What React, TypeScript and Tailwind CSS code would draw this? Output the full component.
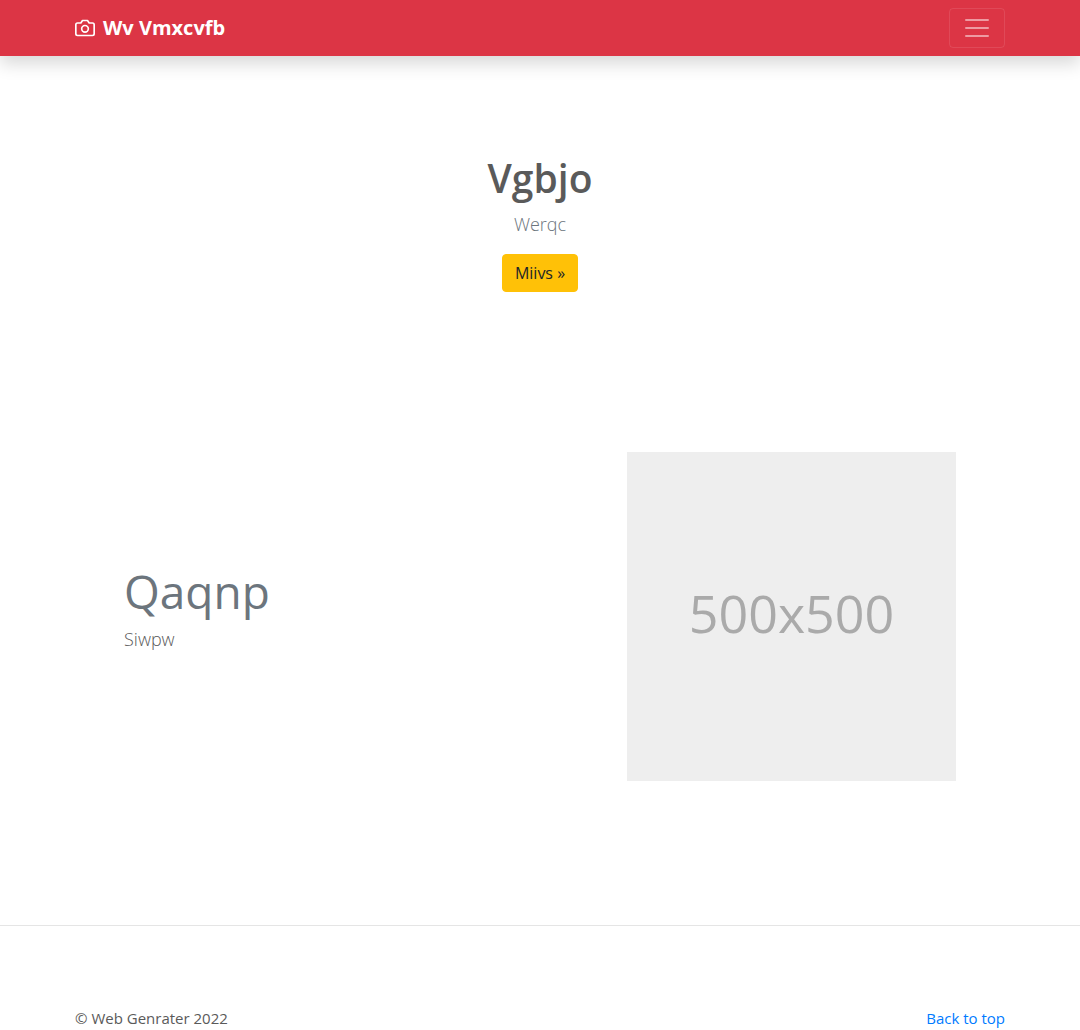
export default function App() {
  return (
    <div className="min-h-screen overflow-x-hidden bg-white font-['Segoe_UI','Open_Sans',sans-serif] text-base leading-6 text-[#5a5a5a]">
      <header className="bg-[#dc3545] shadow-[0_8px_16px_rgba(0,0,0,0.15)]">
        <nav className="mx-auto flex max-w-[960px] items-center justify-between px-[15px] py-2">
          <a href="#" className="flex items-center text-xl leading-8 text-white">
            <svg xmlns="http://www.w3.org/2000/svg" width="20" height="20" viewBox="0 0 24 24" fill="none" stroke="currentColor" strokeWidth="2" strokeLinecap="round" strokeLinejoin="round" className="mr-2" aria-hidden="true">
              <path d="M23 19a2 2 0 0 1-2 2H3a2 2 0 0 1-2-2V8a2 2 0 0 1 2-2h4l2-3h6l2 3h4a2 2 0 0 1 2 2z" />
              <circle cx="12" cy="13" r="4" />
            </svg>
            <strong className="font-bold">Wv Vmxcvfb</strong>
          </a>
          <button type="button" aria-label="Toggle navigation" className="rounded border border-white/10 px-3 py-1 text-white/50">
            <svg width="30" height="30" viewBox="0 0 30 30" stroke="currentColor" strokeWidth="2" strokeLinecap="round" strokeMiterlimit="10" aria-hidden="true">
              <path d="M4 7h22M4 15h22M4 23h22" />
            </svg>
          </button>
        </nav>
      </header>
      <main>
        <section className="flex flex-col items-center px-4 pt-24 pb-40 text-center">
          <h1 className="mb-1 text-[39px] leading-[52px] font-semibold">Vgbjo</h1>
          <p className="mb-3.5 text-lg leading-8 font-light text-[#6c757d]">Werqc</p>
          <a href="#" className="rounded border border-[#ffc107] bg-[#ffc107] px-3 py-1.5 text-[#212529]">Miivs »</a>
        </section>
        <section className="mx-auto flex max-w-[960px] flex-wrap items-center px-16 pb-36">
          <div className="flex-1">
            <h2 className="mb-1 text-[46px] leading-14 text-[#6c757d]">Qaqnp</h2>
            <p className="mb-4 text-lg leading-8 font-light">Siwpw</p>
          </div>
          <div role="img" aria-label="500x500" className="flex aspect-square w-[329px] items-center justify-center bg-[#eeeeee] pb-2 text-[52px] text-[#aaaaaa]">500x500</div>
        </section>
        <hr className="border-t border-black/10" />
      </main>
      <footer className="mx-auto flex max-w-[960px] justify-between px-[15px] pt-20 text-[15px]">
        <p>© Web Genrater 2022</p>
        <a href="#" className="text-[#007bff]">Back to top</a>
      </footer>
    </div>
  );
}
